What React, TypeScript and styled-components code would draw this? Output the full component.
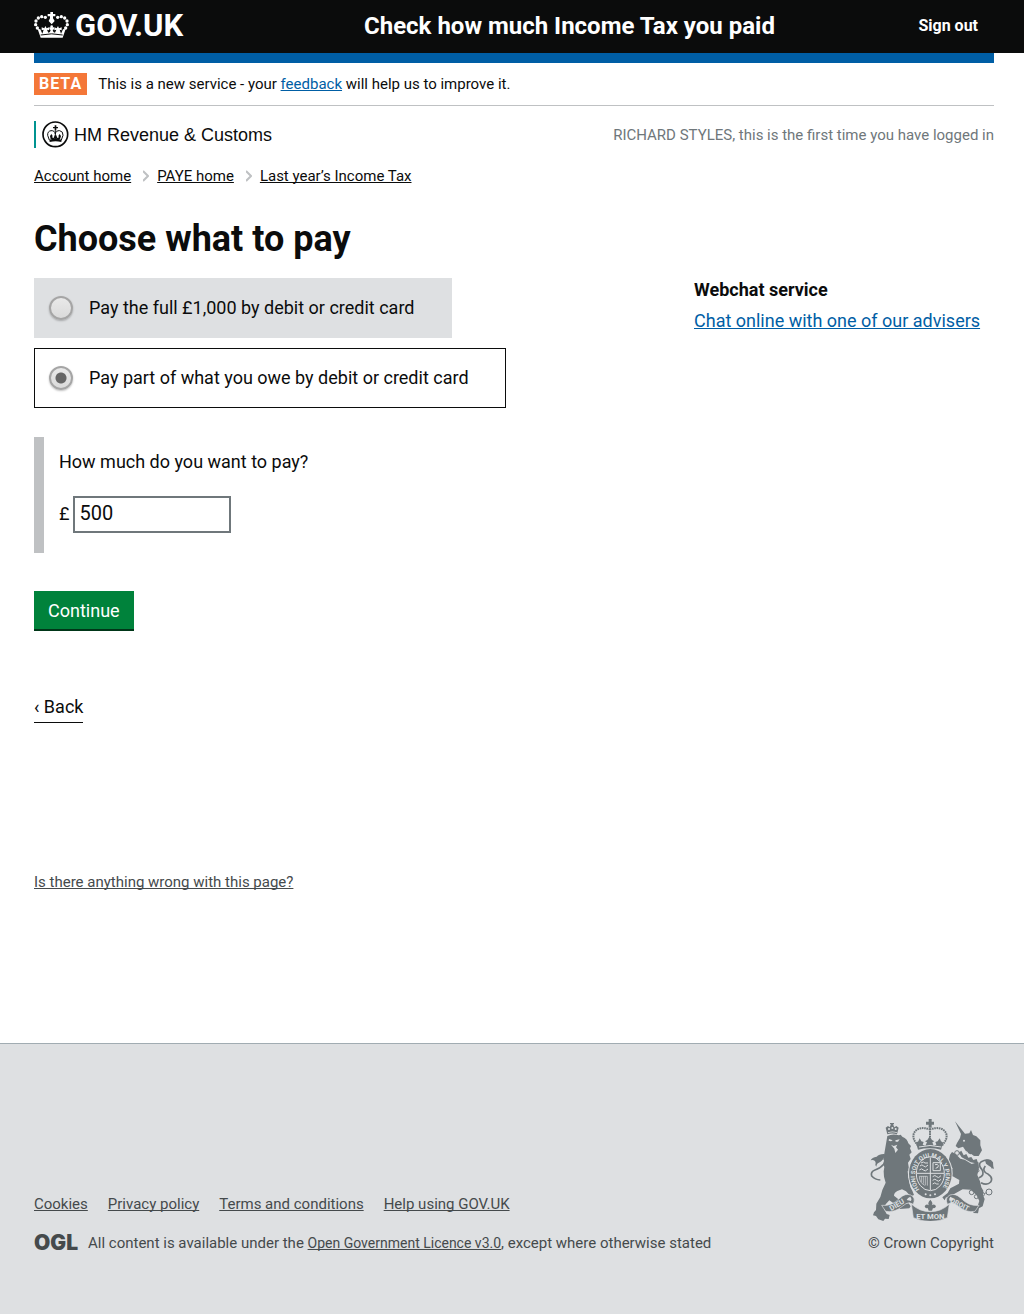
import React, { useState } from "react";
import styled, { createGlobalStyle, css } from "styled-components";

const color = {
  black: "#0b0c0c",
  blue: "#005ea5",
  green: "#00823b",
  orange: "#f47738",
  teal: "#009390",
  grey: "#6f777b",
  panel: "#dee0e2",
  rule: "#bfc1c3",
  footerText: "#454a4c",
};

const GlobalStyle = createGlobalStyle`
  *, *::before, *::after { box-sizing: border-box; }
  body {
    margin: 0;
    background: #fff;
    color: ${color.black};
    font-family: Roboto, "Liberation Sans", sans-serif;
    font-size: 18px;
    line-height: 24px;
  }
  h1, h2, p, ul, ol, fieldset { margin: 0; padding: 0; }
  ul, ol { list-style: none; }
  fieldset { border: 0; min-width: 0; }
`;

const Wrapper = styled.div`
  max-width: 964px;
  margin: 0 auto;
  padding-left: 4px;
`;

const small = css`
  font-size: 15px;
  line-height: 20px;
`;

const TextLink = styled.a<{ $tone?: string }>`
  color: ${(p) => p.$tone || color.blue};
  text-decoration: underline;
  text-decoration-skip-ink: none;
  text-underline-offset: 1px;
`;

/* Header */

const HeaderBar = styled.header`
  background: ${color.black};
  color: #fff;
`;

const HeaderRow = styled(Wrapper)`
  display: flex;
  align-items: center;
  height: 53px;
  padding-right: 16px;
  padding-bottom: 2px;
`;

const Logo = styled.a`
  display: flex;
  align-items: center;
  gap: 6px;
  flex: 0 0 330px;
  color: #fff;
  font-size: 31px;
  font-weight: 700;
  text-decoration: none;
`;

const ServiceName = styled.a`
  flex: 1;
  color: #fff;
  font-size: 24px;
  font-weight: 700;
  text-decoration: none;
`;

const SignOut = styled.a`
  color: #fff;
  font-size: 16px;
  font-weight: 700;
  text-decoration: none;
`;

const BlueBar = styled.div`
  height: 10px;
  background: ${color.blue};
`;

const BetaBanner = styled.div`
  display: flex;
  align-items: center;
  gap: 11px;
  padding: 10px 0;
  border-bottom: 1px solid ${color.rule};
  ${small}
`;

const BetaTag = styled.strong`
  padding: 0 5px;
  background: ${color.orange};
  color: #fff;
  font-size: 16px;
  line-height: 22px;
  letter-spacing: 1px;
`;

const OrgRow = styled.div`
  display: flex;
  justify-content: space-between;
  align-items: center;
  margin-top: 15px;
`;

const Organisation = styled.div`
  display: flex;
  align-items: center;
  gap: 5px;
  height: 27px;
  padding-left: 6px;
  border-left: 2px solid ${color.teal};
  font-family: "Liberation Sans", Arial, sans-serif;
`;

const LoginNote = styled.p`
  color: ${color.grey};
  ${small}
`;

const Breadcrumbs = styled.ol`
  display: flex;
  gap: 12px;
  margin-top: 18px;
  ${small}
`;

const Crumb = styled.li`
  display: flex;
  align-items: center;
  gap: 8px;
`;

/* Content */

const Heading = styled.h1`
  margin-top: 33px;
  font-size: 36px;
  line-height: 40px;
`;

const Columns = styled.div`
  display: grid;
  grid-template-columns: 1fr 300px;
  margin-top: 19px;
`;

const Choices = styled.fieldset`
  display: flex;
  flex-direction: column;
  align-items: flex-start;
  gap: 10px;
`;

const Choice = styled.label<{ $selected: boolean }>`
  display: flex;
  align-items: center;
  gap: 16px;
  height: 60px;
  padding: 0 36px 0 14px;
  border: 1px solid ${(p) => (p.$selected ? color.black : color.panel)};
  background: ${(p) => (p.$selected ? "#fff" : color.panel)};
`;

const Radio = styled.input`
  appearance: none;
  width: 24px;
  height: 24px;
  margin: 0;
  border: 2px solid #a5a5a5;
  border-radius: 50%;
  background: linear-gradient(#e9e9e9, #dadada);
  box-shadow: 0 1px 2px rgba(0, 0, 0, 0.25);

  &:checked {
    background: radial-gradient(circle, #666 5px, transparent 6px),
      linear-gradient(#e9e9e9, #dadada);
  }
`;

const Panel = styled.div`
  margin-top: 29px;
  padding: 13px 0 20px 15px;
  border-left: 10px solid ${color.rule};
`;

const AmountLabel = styled.label`
  display: block;
`;

const AmountRow = styled.div`
  display: flex;
  align-items: baseline;
  gap: 4px;
  margin-top: 22px;
`;

const AmountInput = styled.input`
  width: 158px;
  height: 37px;
  padding: 0 4px 4px;
  border: 2px solid ${color.grey};
  border-radius: 0;
  color: ${color.black};
  font: inherit;
  font-size: 20px;
`;

const Continue = styled.button`
  display: block;
  margin-top: 38px;
  padding: 8px 14px 6px;
  border: 0;
  border-bottom: 2px solid #003618;
  background: ${color.green};
  color: #fff;
  font: inherit;
`;

const BackLink = styled.a`
  display: inline-block;
  margin-top: 64px;
  padding-bottom: 3px;
  border-bottom: 1px solid ${color.black};
  color: ${color.black};
  text-decoration: none;
`;

const Aside = styled.aside`
  display: flex;
  flex-direction: column;
  gap: 7px;
`;

const AsideHeading = styled.h2`
  font-size: 18px;
  line-height: 24px;
`;

const ReportProblem = styled.p`
  margin-top: 149px;
  ${small}
`;

/* Footer */

const FooterBar = styled.footer`
  margin-top: 151px;
  padding: 75px 0 61px;
  border-top: 1px solid #a1acb2;
  background: ${color.panel};
  color: ${color.footerText};
  ${small}
`;

const FooterRow = styled(Wrapper)`
  display: flex;
  justify-content: space-between;
  align-items: flex-end;
`;

const FooterLinks = styled.ul`
  display: flex;
  gap: 20px;
  margin-bottom: 19px;
`;

const Licence = styled.div`
  display: flex;
  align-items: center;
  gap: 10px;
`;

const OglMark = styled.span`
  font-family: Inter, Roboto, sans-serif;
  font-size: 21px;
  font-weight: 900;
`;

const LicenceLink = styled(TextLink)`
  font-size: 14px;
`;

const Copyright = styled.a`
  display: flex;
  flex-direction: column;
  align-items: flex-end;
  gap: 12px;
  color: ${color.footerText};
  text-decoration: none;
`;

/* Drawings */

const Crown = () => (
  <svg width="35" height="27" viewBox="0 0 105 81" fill="#fff" aria-hidden="true">
    <path d="M49 0h8v6h7v7h-7v6l5 8-9 10-9-10 4-8v-6h-7V6h8z" />
    {[
      [34, 16], [23, 14], [13, 18], [6, 27], [5, 38], [10, 48],
      [71, 16], [82, 14], [92, 18], [99, 27], [100, 38], [95, 48],
    ].map(([x, y]) => (
      <circle key={`${x}-${y}`} cx={x} cy={y} r="5" />
    ))}
    <circle cx="53" cy="44" r="4" />
    <path d="M11 51l8 1 6 13 4-12-6 2v-9l8 3 3-7 4 7 7-3v9l-6-2 4 9q6 0 7-8l-4-2v-6h14v6l-4 2q1 8 7 8l4-9-6 2v-9l7 3 4-7 3 7 8-3v9l-6-2 4 12 6-13 8-1-9 26H20z" />
    <path d="M20 69q33-7 66 0" fill="none" stroke="#0b0c0c" strokeWidth="3" />
  </svg>
);

const HmrcCrest = () => (
  <svg width="27" height="27" viewBox="0 0 81 81" fill="#0b0c0c" aria-hidden="true">
    <circle cx="40" cy="40" r="37" fill="none" stroke="#0b0c0c" strokeWidth="5" />
    <path d="M38 13h5v5h5v4h-5v7h-5v-7h-5v-4h5z" />
    <path
      d="M22 57l-5-14q-1-12 10-14 11-1 13 10 2-11 13-10 11 2 10 14l-5 14M40 30v24"
      fill="none"
      stroke="#0b0c0c"
      strokeWidth="3"
    />
    <path d="M24 45l4-6 4 6-2 4 5 2 3-8h5l3 8 5-2-2-4 4-6 4 6-3 10q-14-4-28 0z" />
    <path d="M22 56q18-5 37 0l-1 7q-17-4-35 0z" />
  </svg>
);

const Chevron = () => (
  <svg width="6" height="12" viewBox="0 0 6 12" fill="none" stroke={color.rule} strokeWidth="2" aria-hidden="true">
    <path d="M0 1l5 5-5 5" />
  </svg>
);

const mottoText = {
  fontFamily: "Roboto, sans-serif",
  fontWeight: 700,
  fill: color.panel,
};

const RoyalArms = () => (
  <svg width="125" height="102" viewBox="27 27 375 306" fill={color.grey} aria-hidden="true">
    {/* lion */}
    <path d="M82 73l-5-20 7-5 5 4 4-9h-3v-4h12v4h-3l4 9 6-4 7 5-5 20q-15-5-29 0z" />
    <g fill={color.panel}>
      <circle cx="87" cy="57" r="3" />
      <circle cx="97" cy="54" r="3" />
      <circle cx="107" cy="57" r="3" />
      <path d="M84 67q13-5 27 0v2q-13-4-27 0z" />
    </g>
    <path d="M82 78q16-8 35-2l5-2 5 6q16 7 18 20l8 8-3 7 5 12-7 7 4 13-8 11 2 12 14 12-3 9-14-8 2 20q7 4 3 14l3 14q6 10 11 24l-10 4-14-15-12-6-14 5q-10 5-10 14l16 13 9 12 19-2 6 9-4 6-28 2-15-14-17-12-11 12-5 14 8 15 9 3-3 12-11-1-5 7-15-5-7-10-9-2 3-9 6-7 1-19 12-20 6-21 10-22-5-18-1-16 2-13-3-7 4-8-4-8z" />
    <path d="M87 87l11 4-5 3-7-2zM106 91l13-3-5 7h-7zM93 104l8 4 11-4-4 8 6 7-8 10-3-13z" fill={color.panel} />
    <path
      d="M61 210q-16-1-26-12-4-13 10-18 15-4 26-17 9-18-1-29"
      fill="none"
      stroke={color.grey}
      strokeWidth="5"
    />
    <path d="M74 132q-16-1-24 8-14 2-18 11 13-3 15 8-3 7 2 11 1-10 10-13 8-3 15-18z" />

    {/* unicorn */}
    <path d="M285 34l30 37 13-1 5-10 6 15 10 4 12 12 0 15 5 15-10 17-13 0-22-10-12-18-14 5-8-7 4-9 9-15 3-12z" />
    <circle cx="312" cy="92" r="3" fill={color.panel} />
    <path d="M304 122l7 14 8-4 6 11 9-2 6 9 10-3 5 14-23-4-27-15-9-14z" />
    <path
      d="M304 115l8 15 9-5 5 12 10-3 4 10 11-3"
      fill="none"
      stroke={color.panel}
      strokeWidth="3"
    />
    <path d="M270 134l6-8 11 6 14 14 13 3 21 13 20-6 2 17-5 22 8 19 4 18 6 10-1 14 5 11-6 22-11 6-3 15-13-1-4-10 14-6 7-20-8-17-18-17-24-1-27 15-12 12-11-3-4 9-7-9 16-13 8-14 26-14 1-11-20-11-18 2-5-8 14-5 9-13-14-15z" />
    <path
      d="M356 204q20-8 10-25-14-15-2-24 12-6 19-4 12 8 14 24"
      fill="none"
      stroke={color.grey}
      strokeWidth="5"
    />
    <path
      d="M363 218q18 10 29-2 8-13-7-23-21-9-9-25"
      fill="none"
      stroke={color.grey}
      strokeWidth="5"
    />
    <path d="M375 151q15-9 24 6 0 14 3 20-14-8-24-16z" />
    <g fill="none" stroke={color.grey} strokeWidth="3">
      <circle cx="335" cy="247" r="7" />
      <circle cx="349" cy="260" r="6" />
      <circle cx="367" cy="253" r="6" />
      <circle cx="387" cy="246" r="9" />
      <circle cx="291" cy="129" r="7" />
      <circle cx="279" cy="151" r="6" />
      <circle cx="353" cy="182" r="4" />
      <path d="M355 259l7-4M373 251l6-3M286 135l-5 10" />
    </g>

    {/* ribbon */}
    <g stroke={color.panel} strokeWidth="2">
      <path d="M65 286q30 4 55-22 15-15 32-9 16 8 8 28l-12-5q-10 1-21 11-24 20-50 15z" />
      <path d="M357 286q-30 4-55-22-15-15-32-9-16 8-8 28l12-5q10 1 21 11 24 20 50 15z" />
      <path d="M154 282q24 23 57 23t57-23l-6 41q-51 23-102 0z" />
    </g>
    <path d="M151 260q-8 3-11 10l13 3q4-6-2-13zM271 260q8 3 11 10l-13 3q-4-6 2-13z" fill={color.panel} />
    <g {...mottoText}>
      <text transform="translate(94 303) rotate(-31)" fontSize="22">DIEU</text>
      <text x="211" y="328" textAnchor="middle" fontSize="23">ET MON</text>
      <text transform="translate(269 276) rotate(27)" fontSize="21">DROIT</text>
    </g>

    {/* shield inside the garter */}
    <ellipse cx="211" cy="191" rx="67" ry="77" fill={color.panel} />
    <ellipse cx="211" cy="191" rx="64" ry="74" />
    <ellipse cx="211" cy="191" rx="42" ry="51" fill="none" stroke={color.panel} strokeWidth="3" />
    <path id="garter" d="M179 238A46 56 0 1 1 243 238" fill="none" />
    <text {...mottoText} fontSize="18">
      <textPath href="#garter">HONI SOIT QUI MAL Y PENSE</textPath>
    </text>
    <g fill="none" stroke={color.panel}>
      <path d="M211 142v98M170 190h82" strokeWidth="3" />
      <path d="M180 168q6-7 11 0t13-3M178 180q7-7 12 0t14-3M183 159q8-6 12 0h9" strokeWidth="3" />
      <path d="M219 158h22v24h-22zM225 164q9-3 10 3t-8 8" strokeWidth="3" />
      <path d="M178 199q0 19 16 27M184 199v17M190 199v22M196 199v27M202 199v28M178 199h24" strokeWidth="2" />
      <path d="M218 200q7-7 12 0t13-3M218 211q7-7 12 0t13-3M218 222q7-7 12 0h6" strokeWidth="3" />
    </g>
    <g fill={color.panel}>
      <circle cx="197" cy="253" r="3" />
      <circle cx="211" cy="256" r="3" />
      <circle cx="225" cy="253" r="3" />
    </g>

    {/* central crown */}
    <path d="M206 27h9v8h7v9h-7v9h-9v-9h-8v-9h8z" />
    <g fill="none" stroke={color.grey} strokeDasharray="5 2" strokeWidth="6">
      <path d="M174 106q-19-20-12-37 12-22 48-11" />
      <path d="M246 106q19-20 12-37-12-22-48-11" />
      <path d="M210 56v35" />
    </g>
    <path d="M168 98l7-4 4-9 5 9 7 2-3 8 8 3 5-10-6-3 7-4 7-11 7 11 7 4-6 3 4 10 8-3-3-8 7-2 6-9 4 9 7 4-7 21q-34-8-69 0z" />
    <path d="M177 111q33-9 67 0" fill="none" stroke={color.panel} strokeWidth="3" />

    {/* fleur below the garter */}
    <path d="M211 269q10 11 4 17 9-6 13 3-3 8-9 5l-3 8h-10l-3-8q-7 3-9-5 4-9 13-3-6-6 4-17z" />
  </svg>
);

const crumbs = ["Account home", "PAYE home", "Last year\u2019s Income Tax"];
const choices = [
  { value: "full", label: "Pay the full £1,000 by debit or credit card" },
  { value: "part", label: "Pay part of what you owe by debit or credit card" },
];
const footerLinks = ["Cookies", "Privacy policy", "Terms and conditions", "Help using GOV.UK"];

export default function App() {
  const [choice, setChoice] = useState("part");
  const [amount, setAmount] = useState("500");

  return (
    <>
      <GlobalStyle />
      <HeaderBar>
        <HeaderRow>
          <Logo href="#">
            <Crown />
            GOV.UK
          </Logo>
          <ServiceName href="#">Check how much Income Tax you paid</ServiceName>
          <SignOut href="#">Sign out</SignOut>
        </HeaderRow>
      </HeaderBar>

      <Wrapper>
        <BlueBar />
        <BetaBanner>
          <BetaTag>BETA</BetaTag>
          <span>
            This is a new service - your <TextLink href="#">feedback</TextLink> will help us to improve it.
          </span>
        </BetaBanner>
        <OrgRow>
          <Organisation>
            <HmrcCrest />
            HM Revenue &amp; Customs
          </Organisation>
          <LoginNote>RICHARD STYLES, this is the first time you have logged in</LoginNote>
        </OrgRow>
        <nav aria-label="Breadcrumb">
          <Breadcrumbs>
            {crumbs.map((crumb, i) => (
              <Crumb key={crumb}>
                {i > 0 && <Chevron />}
                <TextLink href="#" $tone={color.black}>{crumb}</TextLink>
              </Crumb>
            ))}
          </Breadcrumbs>
        </nav>

        <main>
          <Heading>Choose what to pay</Heading>
          <Columns>
            <form onSubmit={(e) => e.preventDefault()}>
              <Choices aria-label="Choose what to pay">
                {choices.map(({ value, label }) => (
                  <Choice key={value} $selected={choice === value}>
                    <Radio
                      type="radio"
                      name="payment"
                      value={value}
                      checked={choice === value}
                      onChange={() => setChoice(value)}
                    />
                    {label}
                  </Choice>
                ))}
              </Choices>
              <Panel>
                <AmountLabel htmlFor="amount">How much do you want to pay?</AmountLabel>
                <AmountRow>
                  <span>£</span>
                  <AmountInput
                    id="amount"
                    type="text"
                    value={amount}
                    onChange={(e) => setAmount(e.target.value)}
                  />
                </AmountRow>
              </Panel>
              <Continue type="submit">Continue</Continue>
              <BackLink href="#">‹ Back</BackLink>
            </form>
            <Aside>
              <AsideHeading>Webchat service</AsideHeading>
              <TextLink href="#">Chat online with one of our advisers</TextLink>
            </Aside>
          </Columns>
          <ReportProblem>
            <TextLink href="#" $tone={color.footerText}>Is there anything wrong with this page?</TextLink>
          </ReportProblem>
        </main>
      </Wrapper>

      <FooterBar>
        <FooterRow>
          <div>
            <FooterLinks>
              {footerLinks.map((link) => (
                <li key={link}>
                  <TextLink href="#" $tone={color.footerText}>{link}</TextLink>
                </li>
              ))}
            </FooterLinks>
            <Licence>
              <OglMark>OGL</OglMark>
              <span>
                All content is available under the{" "}
                <LicenceLink href="#" $tone={color.footerText}>Open Government Licence v3.0</LicenceLink>
                , except where otherwise stated
              </span>
            </Licence>
          </div>
          <Copyright href="#">
            <RoyalArms />
            © Crown Copyright
          </Copyright>
        </FooterRow>
      </FooterBar>
    </>
  );
}
